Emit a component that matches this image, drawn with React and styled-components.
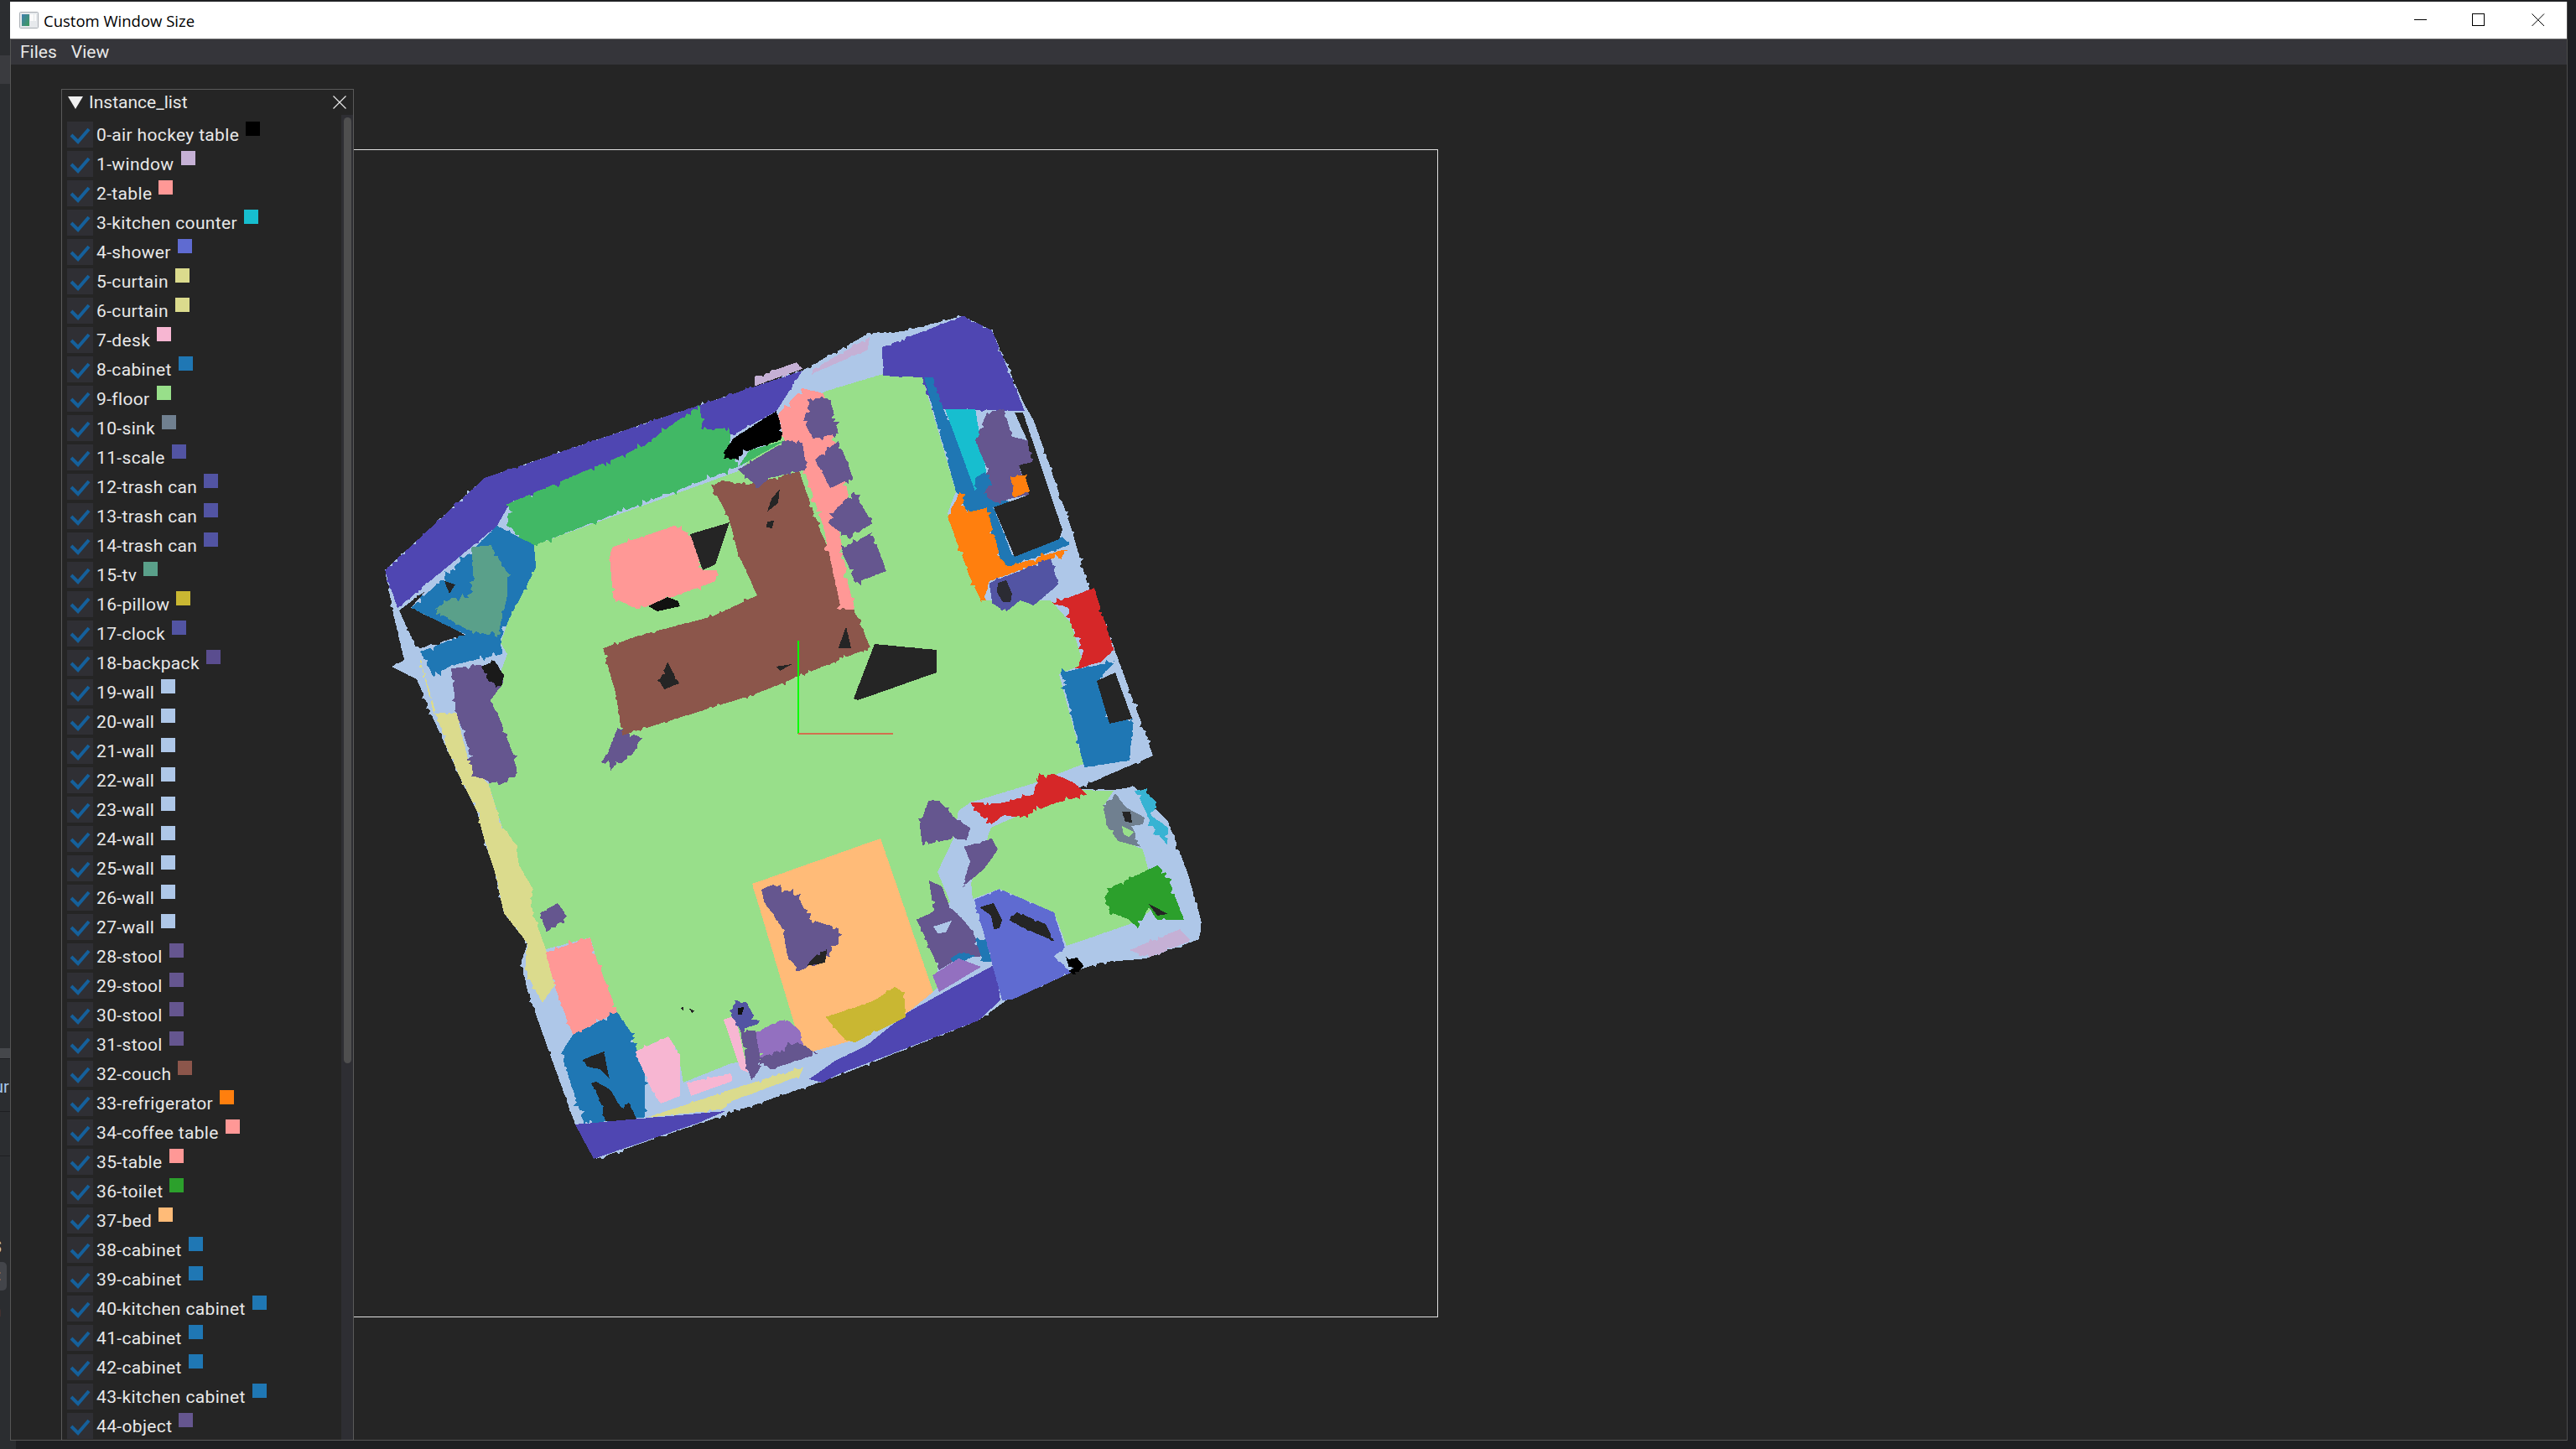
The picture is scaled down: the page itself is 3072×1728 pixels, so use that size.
import React, { useMemo } from "react";
import styled, { createGlobalStyle } from "styled-components";

const GlobalStyle = createGlobalStyle`
  html, body { margin: 0; padding: 0; background: #1e1f22; }
  body { font-family: Roboto, "Liberation Sans", sans-serif; overflow: hidden; }
`;

const WALL = "#aec7e8";
const FLOOR = "#98df8a";
const STOOL = "#65568f";
const PURPLE = "#5254a3";
const SHOWER = "#4f46b2";
const CABINET = "#1f77b4";
const TABLE = "#ff9896";
const VIOLET = "#9370c0";
const CURTAIN = "#dbdb8d";
const DESK = "#f7b6d2";
const HOLE = "#252525";

const instances = [
  ["0-air hockey table", "#000000"], ["1-window", "#c5b0d5"], ["2-table", TABLE],
  ["3-kitchen counter", "#17becf"], ["4-shower", "#5f6bd1"], ["5-curtain", CURTAIN],
  ["6-curtain", CURTAIN], ["7-desk", DESK], ["8-cabinet", CABINET], ["9-floor", FLOOR],
  ["10-sink", "#708090"], ["11-scale", PURPLE], ["12-trash can", PURPLE],
  ["13-trash can", PURPLE], ["14-trash can", PURPLE], ["15-tv", "#5aa08a"],
  ["16-pillow", "#c9b732"], ["17-clock", PURPLE], ["18-backpack", "#5a4d8f"],
  ["19-wall", WALL], ["20-wall", WALL], ["21-wall", WALL], ["22-wall", WALL],
  ["23-wall", WALL], ["24-wall", WALL], ["25-wall", WALL], ["26-wall", WALL],
  ["27-wall", WALL], ["28-stool", STOOL], ["29-stool", STOOL], ["30-stool", STOOL],
  ["31-stool", STOOL], ["32-couch", "#8c564b"], ["33-refrigerator", "#ff7f0e"],
  ["34-coffee table", TABLE], ["35-table", TABLE], ["36-toilet", "#2ca02c"],
  ["37-bed", "#ffbb78"], ["38-cabinet", CABINET], ["39-cabinet", CABINET],
  ["40-kitchen cabinet", CABINET], ["41-cabinet", CABINET], ["42-cabinet", CABINET],
  ["43-kitchen cabinet", CABINET], ["44-object", STOOL],
];

// painter's order, full page coordinates; a = how rough the scanned edge is
const regions = [
  { c: WALL, a: 2, p: [[459,680],[578,570],[769,505],[957,442],[1037,397],[1073,396],[1148,377],[1183,394],[1220,479],[1233,502],[1277,628],[1297,697],[1328,771],[1375,901],[1283,941],[1327,942],[1353,938],[1393,980],[1417,1043],[1433,1100],[1430,1120],[1367,1143],[1313,1148],[1277,1160],[1200,1193],[1167,1217],[1000,1283],[711,1382],[686,1341],[629,1182],[622,1146],[629,1125],[601,1089],[590,1039],[579,1007],[569,968],[551,932],[518,860],[497,810],[467,795],[482,787],[467,723]] },
  { c: FLOOR, a: 1, p: [[637,650],[880,562],[983,467],[1053,446],[1100,450],[1140,586],[1130,612],[1170,716],[1253,716],[1277,743],[1292,792],[1263,804],[1292,911],[1233,934],[1157,957],[1143,967],[1137,1000],[1118,1040],[1133,1075],[1113,1100],[1120,1175],[1113,1183],[958,1257],[872,1268],[815,1291],[808,1253],[797,1236],[758,1254],[751,1229],[726,1196],[704,1118],[651,1132],[629,1082],[583,936],[585,833],[605,780],[597,767]] },
  { c: FLOOR, a: 1, p: [[1182,987],[1283,942],[1328,943],[1317,960],[1333,1000],[1363,1013],[1370,1040],[1380,1080],[1353,1100],[1272,1128],[1257,1088],[1192,1060],[1160,1072],[1158,1053]] },
  { c: SHOWER, a: 1.5, p: [[459,680],[578,570],[769,505],[957,442],[926,490],[872,520],[765,547],[608,600],[593,627],[474,725]] },
  { c: SHOWER, a: 1.5, p: [[1052,414],[1148,377],[1183,394],[1222,490],[1113,488],[1100,450],[1053,448]] },
  { c: "#c5b0d5", a: 2, p: [[967,442],[1037,402],[1035,417],[970,445]] },
  { c: "#c5b0d5", a: 2, p: [[900,450],[950,432],[957,440],[900,460]] },
  { c: "#41b865", a: 3, p: [[608,600],[765,533],[834,483],[838,513],[869,510],[872,527],[880,557],[637,650],[624,653],[605,620]] },
  { c: "#41b865", a: 1, p: [[880,557],[937,525],[894,537]] },
  { c: "#000000", a: 3, p: [[874,523],[926,490],[936,523],[893,537],[872,550],[863,540]] },
  { c: CABINET, a: 3, p: [[593,627],[637,650],[639,677],[608,737],[597,763],[599,780],[539,793],[517,807],[501,777],[555,757],[490,725],[517,700]] },
  { c: "#5aa08a", a: 3, p: [[562,653],[585,650],[605,683],[605,710],[593,760],[555,750],[518,727],[539,713],[559,713],[565,690]] },
  { c: HOLE, a: 1, p: [[530,693],[543,697],[536,708]] },
  { c: HOLE, a: 1.5, p: [[476,728],[507,705],[490,725],[555,757],[501,773],[494,767]] },
  { c: CURTAIN, a: 2, p: [[501,787],[517,850],[544,850],[558,904],[583,936],[597,982],[615,1007],[619,1032],[636,1061],[633,1082],[651,1132],[661,1175],[647,1196],[626,1157],[629,1125],[601,1089],[590,1039],[579,1007],[569,968],[551,932],[533,893]] },
  { c: STOOL, a: 3, p: [[538,797],[574,793],[600,815],[585,835],[597,860],[612,900],[617,922],[597,936],[565,925],[556,885],[544,850]] },
  { c: "#1a1a1a", a: 3, p: [[574,795],[590,788],[601,805],[598,818],[582,812]] },
  { c: TABLE, a: 3, p: [[651,1136],[704,1118],[711,1143],[736,1207],[683,1234],[661,1175]] },
  { c: CABINET, a: 3, p: [[683,1234],[736,1207],[751,1229],[769,1279],[769,1332],[697,1341],[669,1257]] },
  { c: HOLE, a: 1.5, p: [[694,1264],[720,1254],[727,1287],[716,1275],[700,1272]] },
  { c: HOLE, a: 2, p: [[705,1292],[712,1290],[728,1300],[740,1320],[750,1315],[760,1336],[722,1337],[715,1310]] },
  { c: DESK, a: 1.5, p: [[758,1254],[797,1236],[811,1257],[811,1307],[788,1316],[779,1304],[763,1268]] },
  { c: DESK, a: 1.5, p: [[819,1291],[872,1280],[874,1289],[824,1307]] },
  { c: DESK, a: 1, p: [[863,1216],[877,1211],[892,1279],[883,1275]] },
  { c: CURTAIN, a: 2, p: [[770,1333],[831,1313],[885,1295],[958,1273],[954,1283],[873,1313],[862,1323]] },
  { c: SHOWER, a: 1, p: [[686,1341],[865,1325],[833,1339],[708,1382]] },
  { c: SHOWER, a: 1, p: [[965,1287],[996,1265],[1033,1247],[1083,1207],[1117,1188],[1187,1150],[1193,1193],[1167,1217],[1000,1281],[981,1291]] },
  { c: "#ffbb78", a: 1, p: [[897,1054],[1050,1000],[1057,1020],[1113,1183],[1083,1207],[1020,1240],[958,1257]] },
  { c: "#c9b732", a: 1.5, p: [[984,1213],[1000,1208],[1043,1193],[1067,1177],[1078,1183],[1080,1213],[1060,1223],[1020,1243],[1008,1240]] },
  { c: STOOL, a: 3, p: [[908,1061],[922,1055],[951,1068],[965,1096],[1000,1107],[1000,1125],[976,1150],[954,1157],[940,1143],[933,1107],[911,1075]] },
  { c: HOLE, a: 2, p: [[972,1140],[986,1132],[984,1148],[962,1152]] },
  { c: STOOL, a: 3, p: [[644,1089],[665,1077],[676,1093],[652,1112]] },
  { c: STOOL, a: 4, p: [[736,868],[765,880],[754,900],[735,914],[717,909],[726,896]] },
  { c: HOLE, a: 1, p: [[811,1202],[815,1201],[815,1205]] },
  { c: HOLE, a: 1, p: [[820,1202],[828,1205],[826,1208]] },
  { c: PURPLE, a: 3, p: [[876,1193],[890,1195],[904,1221],[883,1228],[872,1211]] },
  { c: "#111111", a: 1, p: [[880,1202],[887,1201],[885,1210],[880,1210]] },
  { c: VIOLET, a: 3, p: [[899,1232],[936,1214],[954,1229],[958,1248],[908,1268]] },
  { c: STOOL, a: 3, p: [[883,1228],[901,1229],[908,1271],[897,1289],[890,1271]] },
  { c: STOOL, a: 3, p: [[905,1262],[951,1243],[976,1257],[919,1275]] },
  { c: "#8c564b", a: 2, p: [[849,580],[861,573],[892,578],[953,562],[976,627],[1010,707],[1038,772],[900,828],[742,877],[735,830],[719,773],[765,757],[850,735],[903,710],[880,660],[869,617]] },
  { c: HOLE, a: 2, p: [[796,790],[810,815],[792,822],[786,812]] },
  { c: HOLE, a: 1, p: [[1009,747],[1015,773],[1000,773]] },
  { c: HOLE, a: 1, p: [[930,583],[928,600],[915,610],[920,595]] },
  { c: HOLE, a: 0.5, p: [[915,622],[923,621],[921,630],[914,629]] },
  { c: HOLE, a: 0.5, p: [[925,795],[945,792],[930,800]] },
  { c: HOLE, a: 0.5, p: [[823,637],[870,623],[853,673],[838,680]] },
  { c: TABLE, a: 2.5, p: [[727,663],[731,652],[804,627],[823,637],[838,680],[855,680],[853,693],[761,727],[731,713]] },
  { c: "#111111", a: 0.5, p: [[773,723],[796,712],[809,717],[811,723],[784,729]] },
  { c: HOLE, a: 0.5, p: [[1018,833],[1043,768],[1117,775],[1117,802],[1023,835]] },
  { c: TABLE, a: 3, p: [[928,494],[957,463],[982,469],[1000,540],[1012,590],[1000,628],[1012,700],[1020,727],[1003,727],[982,628],[960,563],[935,525]] },
  { c: STOOL, a: 3, p: [[967,475],[990,475],[1000,517],[970,523],[958,502]] },
  { c: STOOL, a: 3, p: [[972,548],[1000,526],[1017,569],[990,582]] },
  { c: STOOL, a: 3, p: [[995,609],[1018,586],[1040,624],[1013,643],[988,624]] },
  { c: STOOL, a: 3, p: [[1003,655],[1040,635],[1057,681],[1020,695]] },
  { c: STOOL, a: 2, p: [[880,560],[937,526],[957,528],[962,560],[917,570],[905,582]] },
  { c: CABINET, a: 1.5, p: [[1102,450],[1113,450],[1125,488],[1170,575],[1205,600],[1185,605],[1207,662],[1267,640],[1275,650],[1200,677],[1193,666],[1173,610],[1155,613],[1140,586]] },
  { c: HOLE, a: 0.5, p: [[1210,492],[1220,492],[1267,632],[1263,643],[1210,664],[1185,605],[1227,590],[1215,555],[1230,551],[1225,525]] },
  { c: "#17becf", a: 1, p: [[1127,488],[1163,488],[1177,567],[1163,586]] },
  { c: STOOL, a: 2.5, p: [[1177,492],[1197,488],[1207,521],[1225,525],[1230,551],[1215,555],[1227,590],[1187,599],[1172,590],[1177,559],[1163,525]] },
  { c: CABINET, a: 3, p: [[1163,570],[1175,563],[1182,575],[1172,590],[1162,585]] },
  { c: "#ff7f0e", a: 2, p: [[1205,569],[1222,567],[1228,586],[1210,593]] },
  { c: "#ff7f0e", a: 3, p: [[1145,586],[1153,612],[1177,605],[1193,666],[1202,676],[1270,655],[1267,662],[1180,693],[1172,720],[1157,689],[1137,636],[1130,616]] },
  { c: PURPLE, a: 2, p: [[1180,695],[1253,666],[1262,697],[1233,722],[1217,716],[1200,729],[1183,720]] },
  { c: "#2b2b33", a: 1, p: [[1190,695],[1200,692],[1207,708],[1205,718],[1196,718],[1189,706]] },
  { c: "#d62728", a: 3, p: [[1255,720],[1305,701],[1328,775],[1313,789],[1285,798],[1292,777],[1277,743],[1273,724]] },
  { c: CABINET, a: 3, p: [[1265,802],[1330,789],[1308,812],[1323,861],[1352,857],[1347,907],[1293,915],[1277,850]] },
  { c: HOLE, a: 0.5, p: [[1308,812],[1330,802],[1350,857],[1323,863]] },
  { c: "#d62728", a: 3, p: [[1157,957],[1193,958],[1233,947],[1237,925],[1257,923],[1280,933],[1297,948],[1260,957],[1217,975],[1197,972],[1182,983],[1170,973]] },
  { c: STOOL, a: 2.5, p: [[1150,1010],[1183,1000],[1190,1013],[1173,1037],[1147,1058],[1157,1027]] },
  { c: STOOL, a: 2.5, p: [[1097,983],[1107,955],[1120,955],[1140,977],[1157,987],[1153,1002],[1137,1000],[1100,1008]] },
  { c: STOOL, a: 2.5, p: [[1108,1050],[1123,1057],[1133,1082],[1145,1093],[1160,1110],[1170,1140],[1143,1143],[1120,1157],[1103,1117],[1093,1097],[1113,1087]] },
  { c: WALL, a: 1, p: [[1113,1105],[1135,1098],[1128,1112],[1118,1113]] },
  { c: CABINET, a: 2, p: [[1133,1143],[1147,1135],[1163,1140],[1140,1150]] },
  { c: CABINET, a: 2, p: [[1163,1122],[1177,1120],[1182,1147],[1173,1147]] },
  { c: VIOLET, a: 1, p: [[1112,1163],[1143,1143],[1170,1153],[1120,1183]] },
  { c: "#5f6bd1", a: 1.5, p: [[1162,1073],[1192,1060],[1257,1088],[1270,1130],[1257,1140],[1277,1160],[1207,1192],[1195,1193],[1177,1127]] },
  { c: HOLE, a: 1, p: [[1168,1082],[1185,1077],[1195,1097],[1192,1107],[1185,1108],[1182,1092]] },
  { c: HOLE, a: 1.5, p: [[1203,1097],[1213,1088],[1247,1102],[1257,1122],[1223,1108]] },
  { c: "#000000", a: 4, p: [[1272,1145],[1285,1142],[1292,1152],[1282,1163],[1275,1158]] },
  { c: "#2ca02c", a: 3, p: [[1317,1070],[1327,1057],[1380,1032],[1390,1040],[1412,1097],[1380,1097],[1370,1082],[1357,1107],[1347,1097],[1323,1087]] },
  { c: HOLE, a: 1, p: [[1370,1078],[1393,1090],[1380,1092]] },
  { c: "#708090", a: 1.5, p: [[1315,960],[1330,947],[1343,963],[1365,975],[1363,983],[1350,985],[1360,1010],[1333,1003],[1320,983]] },
  { c: HOLE, a: 0.5, p: [[1338,968],[1348,968],[1350,981],[1342,980]] },
  { c: FLOOR, a: 0.5, p: [[1338,985],[1352,992],[1346,998],[1340,995]] },
  { c: "#37b3d3", a: 3, p: [[1353,943],[1363,942],[1380,957],[1373,973],[1393,987],[1392,1008],[1373,983],[1363,960]] },
  { c: "#c5b0d5", a: 2, p: [[1347,1133],[1407,1108],[1420,1122],[1370,1142]] },
];

// roughens a polygon: nearly straight edge with thin hair-like spikes
function jag(points, amp, seed) {
  let s = seed * 7919 + 13;
  const rnd = () => {
    s = (s * 1664525 + 1013904223) % 4294967296;
    return s / 4294967296;
  };
  const out = [];
  points.forEach((a, i) => {
    const b = points[(i + 1) % points.length];
    const dx = b[0] - a[0];
    const dy = b[1] - a[1];
    const len = Math.hypot(dx, dy) || 1;
    const steps = Math.max(1, Math.floor(len / 2.5));
    for (let k = 0; k < steps; k++) {
      const t = k / steps;
      let n = (rnd() - 0.5) * amp * 0.3;
      if (amp > 1 && rnd() < 0.16) n += (rnd() - 0.5) * amp * 3.5;
      out.push(`${(a[0] + dx * t - (dy / len) * n).toFixed(1)},${(a[1] + dy * t + (dx / len) * n).toFixed(1)}`);
    }
  });
  return out.join(" ");
}

function SceneMap() {
  const shapes = useMemo(
    () => regions.map((r, i) => ({ c: r.c, pts: jag(r.p, r.a, i + 1) })),
    []
  );
  return (
    <MapSvg viewBox="416 179 1298 1391" shapeRendering="crispEdges">
      {shapes.map((s, i) => (
        <polygon key={i} points={s.pts} fill={s.c} />
      ))}
      <line x1="952" y1="764" x2="952" y2="875" stroke="#00ff00" strokeWidth="2" />
      <line x1="952" y1="875" x2="1065" y2="875" stroke="#d2704f" strokeWidth="2" />
    </MapSvg>
  );
}

function AppIcon() {
  return (
    <svg width="23" height="20" viewBox="0 0 23 20">
      <defs>
        <linearGradient id="appFill" x1="0" y1="0" x2="1" y2="1">
          <stop offset="0" stopColor="#3f7fb0" />
          <stop offset="1" stopColor="#3f9a5a" />
        </linearGradient>
      </defs>
      <rect x="0.5" y="0.5" width="22" height="19" rx="1" fill="#e6e9ec" stroke="#a9aeb4" />
      <rect x="3" y="3" width="9" height="14" fill="url(#appFill)" />
      <rect x="13" y="3" width="4" height="8" fill="#fbfbfb" />
      <rect x="18" y="3" width="2" height="8" fill="#fbfbfb" />
    </svg>
  );
}

function WinGlyph({ kind }) {
  return (
    <svg width="16" height="16" viewBox="0 0 16 16" shapeRendering="crispEdges">
      {kind === "min" && <rect x="0" y="7" width="15" height="1" fill="#000" />}
      {kind === "max" && <rect x="0.5" y="0.5" width="14" height="14" fill="none" stroke="#000" />}
      {kind === "close" && (
        <path d="M0.5 0.5L15 15M15 0.5L0.5 15" stroke="#000" shapeRendering="auto" fill="none" />
      )}
    </svg>
  );
}

export default function App() {
  return (
    <>
      <GlobalStyle />
      <Desktop>
        <SideStrip>
          <SideTab />
          <SideBar />
          <SideText $top={21} $left={-7} $color="#a8c7ea">ur</SideText>
          <SideDivider $top={17} />
          <SideDivider $top={52} />
          <SideText $top={96} $left={-10}>S</SideText>
          <SideButton>:</SideButton>
          <SideText $top={12} $left={-10}>n</SideText>
        </SideStrip>
        <MainColumn>
          <Window>
            <TitleBar>
              <AppIcon />
              <TitleText>Custom Window Size</TitleText>
              <WinControls>
                <WinButton $tight><WinGlyph kind="min" /></WinButton>
                <WinButton><WinGlyph kind="max" /></WinButton>
                <WinButton><WinGlyph kind="close" /></WinButton>
              </WinControls>
            </TitleBar>
            <MenuBar>
              <MenuItem>Files</MenuItem>
              <MenuItem>View</MenuItem>
            </MenuBar>
            <Viewport>
              <Frame>
                <SceneMap />
              </Frame>
              <Panel>
                <PanelHeader>
                  <Triangle />
                  <PanelTitle>Instance_list</PanelTitle>
                  <svg width="16" height="16" viewBox="0 0 16 16">
                    <path d="M0.5 0.5L15.5 15.5M15.5 0.5L0.5 15.5" stroke="#e8e8e8" strokeWidth="1.2" fill="none" />
                  </svg>
                </PanelHeader>
                <PanelBody>
                  <List>
                    {instances.map(([name, color]) => (
                      <Row key={name}>
                        <CheckBox>
                          <svg width="31" height="31" viewBox="0 0 31 31">
                            <path d="M5 16L13 24L26 9" stroke="#15609b" strokeWidth="4" fill="none" />
                          </svg>
                        </CheckBox>
                        <Label>{name}</Label>
                        <Swatch $color={color} />
                      </Row>
                    ))}
                  </List>
                  <ScrollTrack>
                    <ScrollThumb />
                  </ScrollTrack>
                </PanelBody>
              </Panel>
            </Viewport>
          </Window>
          <FooterStrip />
        </MainColumn>
        <RightStrip />
      </Desktop>
    </>
  );
}

const Desktop = styled.div`
  width: 3072px;
  height: 1728px;
  display: flex;
  background: #1e1f22;
  overflow: hidden;
`;

const SideStrip = styled.div`
  width: 12px;
  flex: none;
  display: flex;
  flex-direction: column;
  overflow: hidden;
  color: #c8c8c8;
  background: #2b2d30;
`;

const SideTab = styled.div`
  height: 34px;
  flex: none;
  margin-top: 66px;
  background: #3a3b3f;
`;

const SideBar = styled.div`
  height: 12px;
  flex: none;
  margin-top: 1150px;
  background: #45474b;
  border-bottom: 1px solid #1e1f22;
`;

const SideText = styled.div`
  flex: none;
  font-size: 20px;
  line-height: 24px;
  white-space: nowrap;
  margin-top: ${(p) => p.$top}px;
  margin-left: ${(p) => p.$left}px;
  color: ${(p) => p.$color || "#c8c8c8"};
`;

const SideDivider = styled.div`
  height: 1px;
  flex: none;
  margin-top: ${(p) => p.$top}px;
  background: #1e1f22;
`;

const SideButton = styled.div`
  width: 8px;
  height: 34px;
  flex: none;
  margin-top: 6px;
  box-sizing: border-box;
  border-radius: 0 5px 5px 0;
  background: #43454a;
  font-size: 18px;
  line-height: 32px;
  text-indent: -3px;
  overflow: hidden;
`;

const MainColumn = styled.div`
  flex: 1;
  min-width: 0;
  display: flex;
  flex-direction: column;
  padding-top: 2px;
`;

const FooterStrip = styled.div`
  width: 7px;
  flex: 1;
  background: #2b2d30;
`;

const RightStrip = styled.div`
  width: 10px;
  flex: none;
`;

const Window = styled.div`
  height: 1716px;
  flex: none;
  display: flex;
  flex-direction: column;
  border-right: 1px solid #4b4b4b;
`;

const TitleBar = styled.div`
  height: 44px;
  flex: none;
  box-sizing: border-box;
  padding-left: 11px;
  display: flex;
  align-items: center;
  background: #ffffff;
`;

const TitleText = styled.div`
  margin-left: 6px;
  font-family: "Open Sans", "Noto Sans", sans-serif;
  font-size: 18.5px;
  color: #000000;
`;

const WinControls = styled.div`
  margin-left: auto;
  display: flex;
  padding-right: 26px;
  gap: 55px;
`;

const WinButton = styled.div`
  width: 16px;
  height: 16px;
  display: flex;
  margin-right: ${(p) => (p.$tight ? "-2px" : "0")};
`;

const MenuBar = styled.div`
  height: 31px;
  flex: none;
  box-sizing: border-box;
  border-top: 1px solid #6c6c6c;
  border-left: 1px solid #555555;
  padding-left: 11px;
  display: flex;
  gap: 17px;
  align-items: center;
  background: #35353a;
`;

const MenuItem = styled.div`
  font-size: 21px;
  color: #e8e8e8;
`;

const Viewport = styled.div`
  flex: 1;
  position: relative;
  background: #252525;
  border-left: 1px solid #555555;
  border-bottom: 1px solid #555555;
`;

const Frame = styled.div`
  position: absolute;
  left: 402px;
  top: 101px;
  width: 1300px;
  height: 1393px;
  box-sizing: border-box;
  border: 1px solid #e0e0e0;
`;

const MapSvg = styled.svg`
  display: block;
  width: 1298px;
  height: 1391px;
`;

const Panel = styled.div`
  position: absolute;
  left: 60px;
  top: 29px;
  width: 349px;
  height: 1612px;
  box-sizing: border-box;
  border: 1px solid #5a5a5a;
  background: #252525;
  display: flex;
  flex-direction: column;
  overflow: hidden;
`;

const PanelHeader = styled.div`
  height: 30px;
  flex: none;
  display: flex;
  align-items: center;
  padding: 0 8px 0 7px;
`;

const Triangle = styled.div`
  width: 0;
  height: 0;
  border-left: 9px solid transparent;
  border-right: 9px solid transparent;
  border-top: 15px solid #f0f0f0;
`;

const PanelTitle = styled.div`
  flex: 1;
  margin-left: 7px;
  font-size: 21px;
  color: #e8e8e8;
`;

const PanelBody = styled.div`
  flex: 1;
  min-height: 0;
  display: flex;
`;

const List = styled.div`
  flex: 1;
  min-width: 0;
  box-sizing: border-box;
  padding: 8px 0 0 6px;
  display: flex;
  flex-direction: column;
  gap: 4px;
`;

const Row = styled.div`
  height: 31px;
  flex: none;
  display: flex;
  align-items: flex-start;
`;

const CheckBox = styled.div`
  width: 31px;
  height: 31px;
  flex: none;
  background: #2f2f34;
`;

const Label = styled.div`
  margin-left: 4px;
  font-size: 21px;
  line-height: 33px;
  letter-spacing: 0.35px;
  color: #e8e8e8;
  white-space: nowrap;
`;

const Swatch = styled.div`
  width: 17px;
  height: 17px;
  margin-left: 8px;
  flex: none;
  background: ${(p) => p.$color};
`;

const ScrollTrack = styled.div`
  width: 14px;
  flex: none;
  box-sizing: border-box;
  padding: 3px 2px 0 3px;
  background: #2e2e33;
`;

const ScrollThumb = styled.div`
  height: 1128px;
  border-radius: 5px;
  background: #4f4f4f;
`;
